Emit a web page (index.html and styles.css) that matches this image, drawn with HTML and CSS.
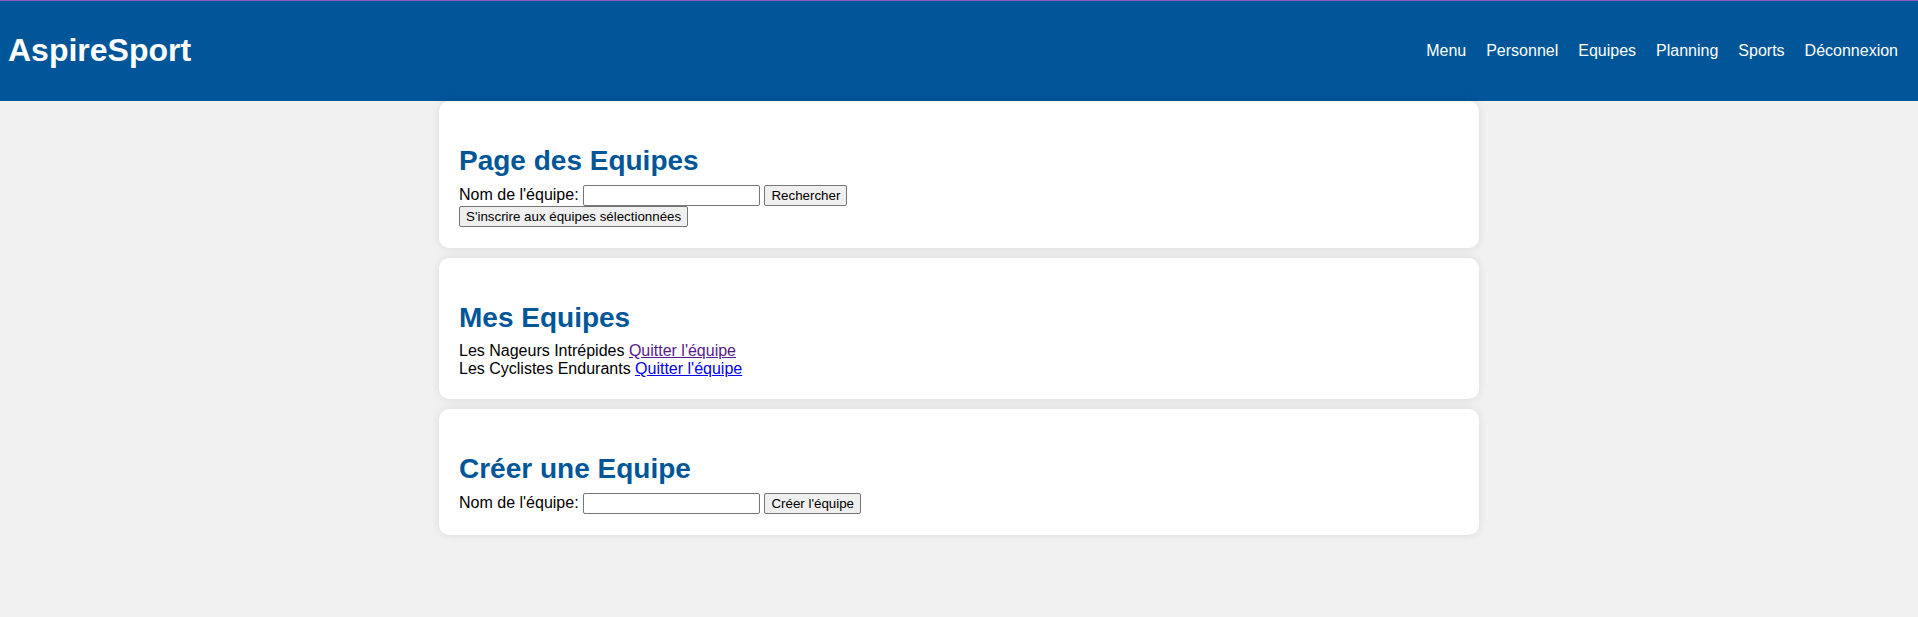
FILE: index.html
```html
<!DOCTYPE html>
<html lang="fr">
<head>
<meta charset="utf-8">
<title>AspireSport - Equipes</title>
<link rel="stylesheet" href="styles.css">
</head>
<body>
<header class="site-header">
  <h1 class="brand">AspireSport</h1>
  <nav class="nav">
    <a href="#">Menu</a>
    <a href="#">Personnel</a>
    <a href="#">Equipes</a>
    <a href="#">Planning</a>
    <a href="#">Sports</a>
    <a href="#">Déconnexion</a>
  </nav>
</header>
<main class="container">
  <section class="card">
    <h2 class="card-title">Page des Equipes</h2>
    <form class="form">
      <div class="row">Nom de l'équipe: <input type="text" class="field"> <button type="button" class="btn">Rechercher</button></div>
      <div class="row"><button type="button" class="btn">S'inscrire aux équipes sélectionnées</button></div>
    </form>
  </section>
  <section class="card">
    <h2 class="card-title">Mes Equipes</h2>
    <div class="team">Les Nageurs Intrépides <a href="#" class="link visited">Quitter l'équipe</a></div>
    <div class="team">Les Cyclistes Endurants <a href="#" class="link">Quitter l'équipe</a></div>
  </section>
  <section class="card">
    <h2 class="card-title">Créer une Equipe</h2>
    <form class="form">
      <div class="row">Nom de l'équipe: <input type="text" class="field"> <button type="button" class="btn">Créer l'équipe</button></div>
    </form>
  </section>
</main>
</body>
</html>
```
FILE: styles.css
```css
html, body {
  margin: 0;
  padding: 0;
}
body {
  background: #f1f1f1;
  font-family: "Liberation Sans", Arial, sans-serif;
  font-size: 16px;
  color: #000;
}
.site-header {
  display: flex;
  align-items: center;
  justify-content: space-between;
  box-sizing: border-box;
  height: 101px;
  border-top: 1px solid #8a5cc2;
  background: #005698;
  padding: 0 10px 1px 8px;
  color: #fff;
}
.brand {
  margin: 0;
  font-size: 32px;
  font-weight: bold;
  line-height: 37px;
}
.nav {
  display: flex;
}
.nav a {
  color: #fff;
  text-decoration: none;
  margin: 0 10px;
  font-size: 16px;
}
.container {
  width: 1040px;
  margin: 0 auto;
}
.card {
  background: #fff;
  border-radius: 10px;
  box-shadow: 0 0 10px rgba(0, 0, 0, 0.1);
  padding: 20px 20px 21px;
  margin-bottom: 10px;
}
.card-title {
  margin: 24px 0 8px;
  font-size: 28px;
  font-weight: bold;
  color: #005698;
}
.form {
  margin: 0;
}
.field {
  box-sizing: border-box;
  width: 177px;
  height: 21px;
  border: 1px solid #767676;
  border-radius: 2px;
  padding: 1px 2px;
  font: 13.333px "Liberation Sans", Arial, sans-serif;
  background: #fff;
  vertical-align: baseline;
}
.btn {
  box-sizing: border-box;
  height: 21px;
  padding: 1px 6px;
  border: 1px solid #767676;
  border-radius: 2px;
  background: #efefef;
  color: #000;
  font: 13.333px "Liberation Sans", Arial, sans-serif;
}
.link {
  color: #0000ee;
  text-decoration: underline;
}
.link.visited {
  color: #551a8b;
}
```
